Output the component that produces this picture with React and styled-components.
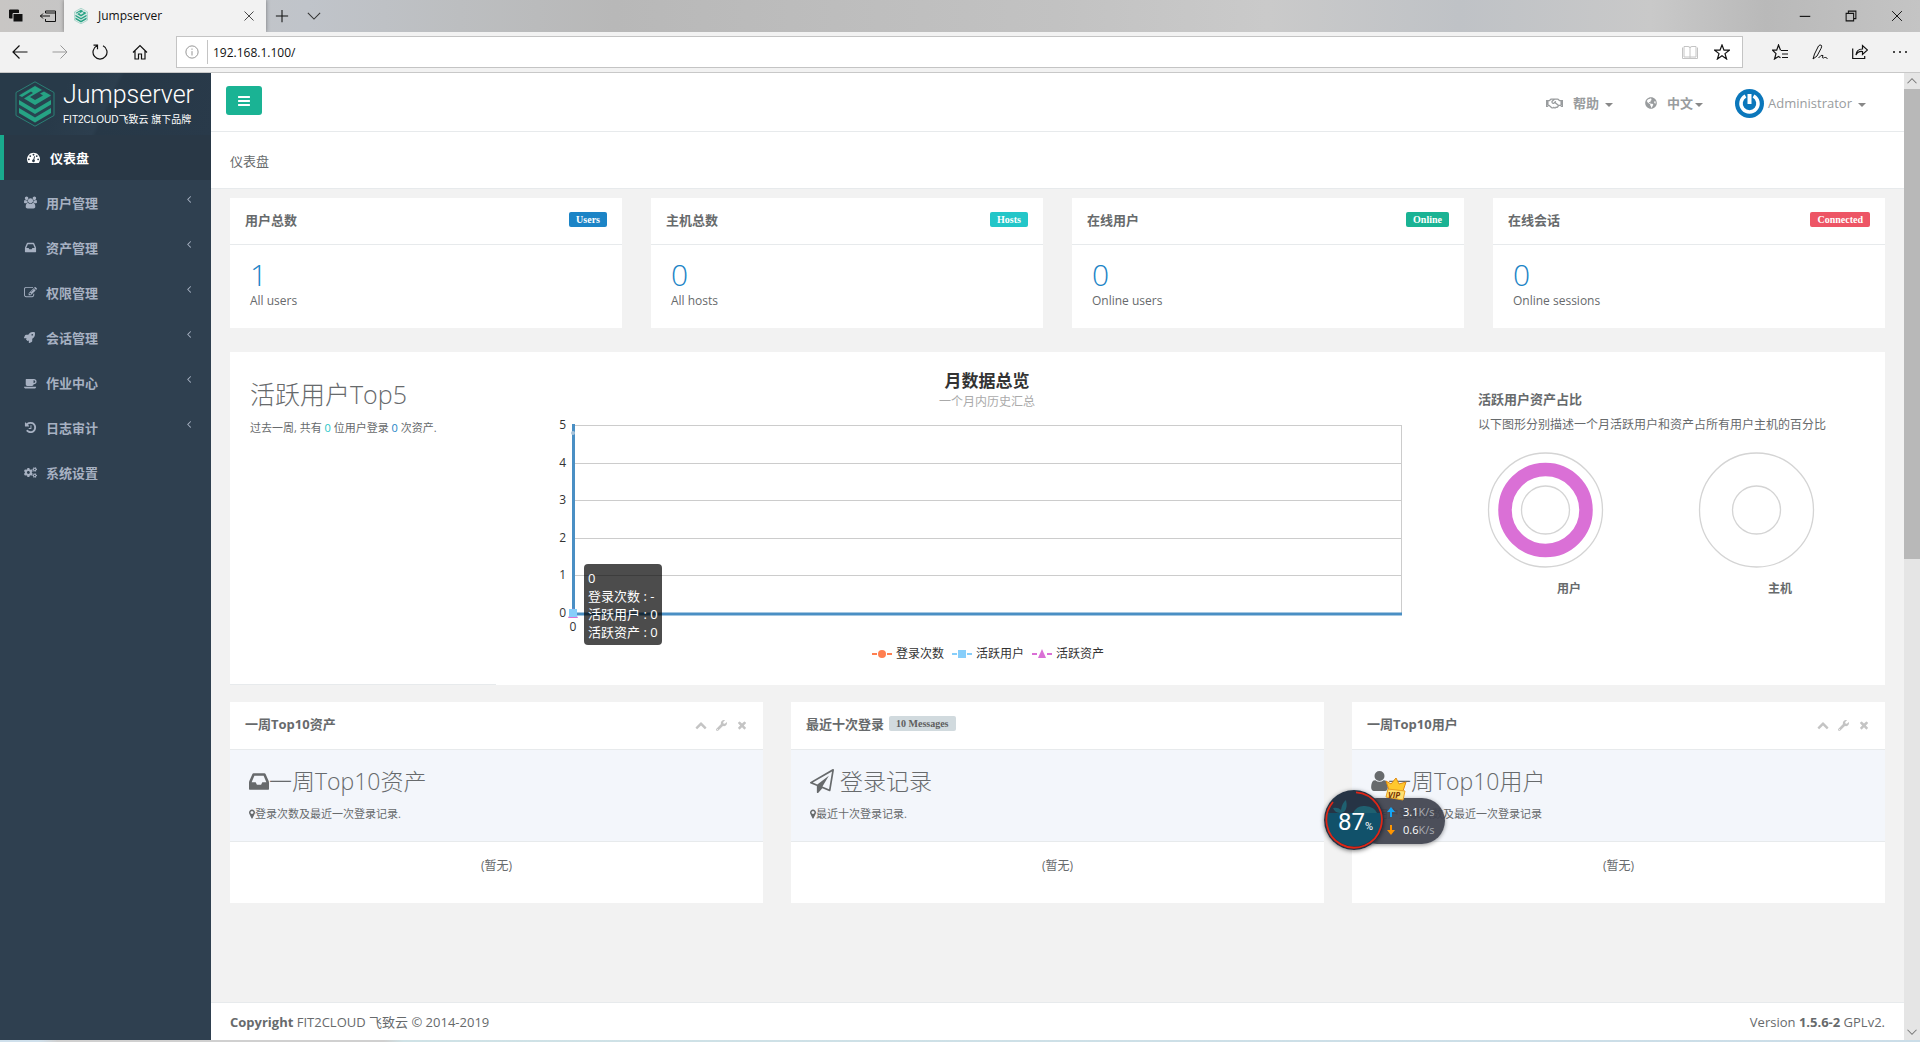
import { useState } from 'react';
import styled, { createGlobalStyle } from 'styled-components';
import { FaRocket, FaCogs, FaWrench, FaGlobeAmericas, FaRegHandshake } from 'react-icons/fa';

const paths = {
  bars: 'M1664 1344v128q0 26-19 45t-45 19h-1408q-26 0-45-19t-19-45v-128q0-26 19-45t45-19h1408q26 0 45 19t19 45zm0-512v128q0 26-19 45t-45 19h-1408q-26 0-45-19t-19-45v-128q0-26 19-45t45-19h1408q26 0 45 19t19 45zm0-512v128q0 26-19 45t-45 19h-1408q-26 0-45-19t-19-45v-128q0-26 19-45t45-19h1408q26 0 45 19t19 45z',
  users:
    'M593 896q-162 5-265 128h-134q-82 0-138-40.5t-56-118.5q0-353 124-353 6 0 43.5 21t97.5 42.5 119 21.5q67 0 133-23-5 37-5 66 0 139 81 256zm1071 637q0 120-73 189.5t-194 69.5h-874q-121 0-194-69.5t-73-189.5q0-53 3.5-103.5t14-109 26.5-108.5 43-97.5 62-81 85.5-53.5 111.5-20q10 0 43 21.5t73 48 107 48 135 21.5 135-21.5 107-48 73-48 43-21.5q61 0 111.5 20t85.5 53.5 62 81 43 97.5 26.5 108.5 14 109 3.5 103.5zm-1024-1277q0 106-75 181t-181 75-181-75-75-181 75-181 181-75 181 75 75 181zm704 384q0 159-112.5 271.5t-271.5 112.5-271.5-112.5-112.5-271.5 112.5-271.5 271.5-112.5 271.5 112.5 112.5 271.5zm576 225q0 78-56 118.5t-138 40.5h-134q-103-123-265-128 81-117 81-256 0-29-5-66 66 23 133 23 59 0 119-21.5t97.5-42.5 43.5-21q124 0 124 353zm-128-609q0 106-75 181t-181 75-181-75-75-181 75-181 181-75 181 75 75 181z',
  inbox:
    'M1151 960h316q-1-3-2.5-8t-2.5-8l-212-496h-708l-212 496q-1 2-2.5 8t-2.5 8h316l95 192h320zm513 30v482q0 26-19 45t-45 19h-1408q-26 0-45-19t-19-45v-482q0-62 25-123l238-552q10-25 36.5-42t52.5-17h832q26 0 52.5 17t36.5 42l238 552q25 61 25 123z',
  up: 'M1683 1331l-166 165q-19 19-45 19t-45-19l-531-531-531 531q-19 19-45 19t-45-19l-166-165q-19-19-19-45.5t19-45.5l742-741q19-19 45-19t45 19l742 741q19 19 19 45.5t-19 45.5z',
  times:
    'M1490 1322q0 40-28 68l-136 136q-28 28-68 28t-68-28l-294-294-294 294q-28 28-68 28t-68-28l-136-136q-28-28-28-68t28-68l294-294-294-294q-28-28-28-68t28-68l136-136q28-28 68-28t68 28l294 294 294-294q28-28 68-28t68 28l136 136q28 28 28 68t-28 68l-294 294 294 294q28 28 28 68z',
  user: 'M1536 1399q0 109-62.5 187t-150.5 78h-854q-88 0-150.5-78t-62.5-187q0-85 8.5-160.5t31.5-152 58.5-131 94-89 134.5-34.5q131 128 313 128t313-128q76 0 134.5 34.5t94 89 58.5 131 31.5 152 8.5 160.5zm-256-887q0 159-112.5 271.5t-271.5 112.5-271.5-112.5-112.5-271.5 112.5-271.5 271.5-112.5 271.5 112.5 112.5 271.5z',
  marker:
    'M1152 640q0-106-75-181t-181-75-181 75-75 181 75 181 181 75 181-75 75-181zm256 0q0 109-33 179l-364 774q-16 33-47.5 52t-67.5 19-67.5-19-46.5-52l-365-774q-33-70-33-179 0-212 150-362t362-150 362 150 150 362z',
  coffee:
    'M1664 768q0-80-56-136t-136-56h-64v384h64q80 0 136-56t56-136zm-1664 768h1792q0 106-75 181t-181 75h-1280q-106 0-181-75t-75-181zm1856-768q0 159-112.5 271.5t-271.5 112.5h-64v32q0 92-66 158t-158 66h-704q-92 0-158-66t-66-158v-736q0-26 19-45t45-19h1152q159 0 271.5 112.5t112.5 271.5z',
  dashboard:
    'M384 1152q0-53-37.5-90.5t-90.5-37.5-90.5 37.5-37.5 90.5 37.5 90.5 90.5 37.5 90.5-37.5 37.5-90.5zm192-448q0-53-37.5-90.5t-90.5-37.5-90.5 37.5-37.5 90.5 37.5 90.5 90.5 37.5 90.5-37.5 37.5-90.5zm428 481l101-382q6-26-7.5-48.5t-38.5-29.5-48 6.5-30 39.5l-101 382q-60 5-107 43.5t-63 98.5q-20 77 20 146t117 89 146-20 89-117q16-60-6-117t-72-91zm660-33q0-53-37.5-90.5t-90.5-37.5-90.5 37.5-37.5 90.5 37.5 90.5 90.5 37.5 90.5-37.5 37.5-90.5zm-640-640q0-53-37.5-90.5t-90.5-37.5-90.5 37.5-37.5 90.5 37.5 90.5 90.5 37.5 90.5-37.5 37.5-90.5zm448 192q0-53-37.5-90.5t-90.5-37.5-90.5 37.5-37.5 90.5 37.5 90.5 90.5 37.5 90.5-37.5 37.5-90.5zm320 448q0 261-141 483-19 29-54 29h-1402q-35 0-54-29-141-221-141-483 0-182 71-348t191-286 286-191 348-71 348 71 286 191 191 286 71 348z',
  history:
    'M1664 896q0 156-61 298t-164 245-245 164-298 61q-172 0-327-72.5t-264-204.5q-7-10-6.5-22.5t8.5-20.5l137-138q10-9 25-9 16 2 23 12 73 95 179 147t225 52q104 0 198.5-40.5t163.5-109.5 109.5-163.5 40.5-198.5-40.5-198.5-109.5-163.5-163.5-109.5-198.5-40.5q-98 0-188 35.5t-160 101.5l137 138q31 30 14 69-17 40-59 40h-448q-26 0-45-19t-19-45v-448q0-42 40-59 39-17 69 14l130 129q107-101 244.5-156.5t284.5-55.5q156 0 298 61t245 164 164 245 61 298zm-640-288v448q0 14-9 23t-23 9h-320q-14 0-23-9t-9-23v-64q0-14 9-23t23-9h224v-352q0-14 9-23t23-9h64q14 0 23 9t9 23z',
  edit: 'M888 1184l116-116-152-152-116 116v56h96v96h56zm440-720q-16-16-33 1l-350 350q-17 17-1 33t33-1l350-350q17-17 1-33zm80 594v190q0 119-84.5 203.5t-203.5 84.5h-832q-119 0-203.5-84.5t-84.5-203.5v-832q0-119 84.5-203.5t203.5-84.5h832q63 0 117 25 15 7 18 23 3 17-9 29l-49 49q-14 14-32 8-23-6-45-6h-832q-66 0-113 47t-47 113v832q0 66 47 113t113 47h832q66 0 113-47t47-113v-126q0-13 9-22l64-64q15-15 35-7t20 29zm-96-738l288 288-672 672h-288v-288zm444 132l-92 92-288-288 92-92q28-28 68-28t68 28l152 152q28 28 28 68t-28 68z',
  plane:
    'M1764 11q33 24 27 64l-256 1536q-5 29-32 45-14 8-31 8-11 0-24-5l-527-215-298 327q-18 21-47 21-14 0-23-4-19-7-30-23.5t-11-36.5v-452l-472-193q-37-14-40-55-3-39 32-59l1664-960q35-21 68 2zm-342 1499l221-1323-1434 827 336 137 863-639-478 797z',
  left: 'M1203 544q0 13-10 23l-393 393 393 393q10 10 10 23t-10 23l-50 50q-10 10-23 10t-23-10l-466-466q-10-10-10-23t10-23l466-466q10-10 23-10t23 10l50 50q10 10 10 23z',
};

function Icon({ name, size = 13, width = size, box = '0 0 1792 1792' }) {
  return (
    <svg width={width} height={size} viewBox={box} fill="currentColor" aria-hidden="true">
      <path d={paths[name]} />
    </svg>
  );
}

// 浏览器工具栏图标
function Line({ size = 16, color = '#111', children }) {
  return (
    <svg width={size} height={size} viewBox="0 0 16 16" fill="none" stroke={color} aria-hidden="true">
      {children}
    </svg>
  );
}

function LogoMark({ size, ring }) {
  return (
    <svg width={size} height={(size * 46) / 40} viewBox="0 0 40 46" aria-hidden="true">
      <path d="M20 .8 39 11.5v23L20 45.2 1 34.5v-23z" fill="none" stroke={ring} strokeWidth="1" />
      <path d="M20 4 36 13v19.5L20 42 4 32.5V13z" fill={ring} opacity=".15" />
      <path d="M4 14.5 20 5l7 4-12 7 5 3 8-4.500-3-2 4-2 7 4L20 24 9 17.500l9-5.500-2-1.500-9 5.500z" fill="#26a384" />
      <path d="M4 19l16 9.5L36 19v4.5L20 33 4 23.5z" fill="#26a384" />
      <path d="M4 27l16 9.5L36 27v5L20 41.5 4 32z" fill="#26a384" />
    </svg>
  );
}

const menus = [
  { label: '用户管理', icon: <Icon name="users" box="0 0 1920 1792" /> },
  { label: '资产管理', icon: <Icon name="inbox" /> },
  { label: '权限管理', icon: <Icon name="edit" /> },
  { label: '会话管理', icon: <FaRocket size={11} /> },
  { label: '作业中心', icon: <Icon name="coffee" box="0 0 1920 1792" /> },
  { label: '日志审计', icon: <Icon name="history" /> },
  { label: '系统设置', icon: <FaCogs size={13} />, leaf: true },
];

const stats = [
  { title: '用户总数', tag: 'Users', color: '#1c84c6', value: 1, desc: 'All users' },
  { title: '主机总数', tag: 'Hosts', color: '#23c6c8', value: 0, desc: 'All hosts' },
  { title: '在线用户', tag: 'Online', color: '#1ab394', value: 0, desc: 'Online users' },
  { title: '在线会话', tag: 'Connected', color: '#ed5565', value: 0, desc: 'Online sessions' },
];

const boxes = [
  {
    title: '一周Top10资产',
    head: '一周Top10资产',
    icon: <Icon name="inbox" size={17} width={20} box="128 256 1536 1280" />,
    note: '登录次数及最近一次登录记录.',
    tools: true,
  },
  {
    title: '最近十次登录',
    head: '登录记录',
    icon: <Icon name="plane" size={24} />,
    spaced: true,
    note: '最近十次登录记录.',
    messages: '10 Messages',
  },
  {
    title: '一周Top10用户',
    head: '一周Top10用户',
    icon: <Icon name="user" size={20} width={17} box="256 128 1280 1536" />,
    note: '用户登录次数及最近一次登录记录',
    tools: true,
  },
];

function Browser() {
  const [url, setUrl] = useState('192.168.1.100/');

  return (
    <>
      <TabBar>
        <TabTools>
          <TabButton aria-label="Tabs set aside">
            <Line>
              <path d="M1.5 2h9v8h-9z" fill="#111" />
              <path d="M5 5.5h10V14H5z" fill="#111" stroke="#c8c8c8" />
            </Line>
          </TabButton>
          <TabButton aria-label="Set tabs aside">
            <Line>
              <path d="M5.5 5V3h10v10.5h-10V11M5.5 5h10M0 8h10M3 5.5.5 8 3 10.5" />
            </Line>
          </TabButton>
        </TabTools>
        <Tab>
          <LogoMark size={14} ring="#26a384" />
          <span>Jumpserver</span>
          <TabButton aria-label="Close tab">
            <Line size={12}>
              <path d="M2 2l12 12M14 2 2 14" />
            </Line>
          </TabButton>
        </Tab>
        <NewTabs>
          <TabButton aria-label="New tab">
            <Line size={14}>
              <path d="M8 1v14M1 8h14" strokeWidth="1.2" />
            </Line>
          </TabButton>
          <TabButton aria-label="Tab previews">
            <Line size={14} color="#333">
              <path d="M1 4.5l7 7 7-7" strokeWidth="1.2" />
            </Line>
          </TabButton>
        </NewTabs>
        <WindowTools>
          <TabButton aria-label="Minimize">
            <Line size={12}>
              <path d="M1 8.500h14" strokeWidth="1.5" />
            </Line>
          </TabButton>
          <TabButton aria-label="Restore">
            <Line size={12}>
              <path d="M1.5 4.5h10v10h-10zM4.5 4.5v-3h10v10h-3" strokeWidth="1.4" />
            </Line>
          </TabButton>
          <TabButton aria-label="Close">
            <Line size={12}>
              <path d="M1.5 1.5l13 13M14.5 1.5l-13 13" strokeWidth="1.3" />
            </Line>
          </TabButton>
        </WindowTools>
      </TabBar>
      <AddressBar>
        <NavButtons>
          <TabButton aria-label="Back">
            <Line>
              <path d="M15.5 8H1M7.5 1.5 1 8l6.5 6.5" strokeWidth="1.2" />
            </Line>
          </TabButton>
          <TabButton aria-label="Forward">
            <Line color="#999">
              <path d="M.5 8H15M8.5 1.5 15 8l-6.5 6.5" />
            </Line>
          </TabButton>
          <TabButton aria-label="Refresh">
            <Line>
              <path d="M11 1.8A7 7 0 1 1 5 1.8M1.5 1.2h4v4" strokeWidth="1.2" />
            </Line>
          </TabButton>
          <TabButton aria-label="Home">
            <Line>
              <path d="M1 8.5 8 1.5l7 7M3 7v8h3.5v-5h3v5H13V7" strokeWidth="1.2" />
            </Line>
          </TabButton>
        </NavButtons>
        <UrlBox>
          <Line size={14} color="#888">
            <circle cx="8" cy="8" r="7" />
            <path d="M8 7v5M8 4v1.5" />
          </Line>
          <UrlInput aria-label="URL" value={url} onChange={(e) => setUrl(e.target.value)} />
          <Line color="#c4c4c4">
            <path d="M8 3v11M2 2.5h4q2 0 2 1.5 0-1.5 2-1.5h4V13H2zM.5 3.5v11h15v-11" />
          </Line>
          <Line>
            <path d="M8 1l2 5.200h5.300l-4.300 3.400 1.600 5.400L8 11.800 3.400 15 5 9.600.700 6.200H6z" strokeWidth="1.2" />
          </Line>
        </UrlBox>
        <HubButtons>
          <TabButton aria-label="Favorites">
            <Line>
              <path d="M9 6.5h7M10 10h6M10 13.5h6M8.500 6.200 6.500 1 4.700 6.200H.500L4 9.600 2.500 15l4-2.500 2 1.200" strokeWidth="1.2" />
            </Line>
          </TabButton>
          <TabButton aria-label="Add notes">
            <Line>
              <path d="M1 15 2.5 10 6.500 2q1.500-2 3-.500.500 1-.500 3L5 12zM6.500 14q3-4 4.500-2.500-1.500 3 .500 2.500l1-.500q1-.500 3 1" />
            </Line>
          </TabButton>
          <TabButton aria-label="Share">
            <Line>
              <path d="M.7 4.5v10h12V12M4 11q.5-6 6.5-6V1.5L15.5 6l-5 4.500V7.500Q6 7 4 11z" strokeWidth="1.2" />
            </Line>
          </TabButton>
          <TabButton aria-label="More">
            <Line>
              <path d="M1 8h2M7 8h2M13 8h2" strokeWidth="1.5" />
            </Line>
          </TabButton>
        </HubButtons>
      </AddressBar>
    </>
  );
}

function Sidebar() {
  return (
    <Side>
      <Logo>
        <LogoMark size={40} ring="#2b8176" />
        <LogoText>
          <LogoName>Jumpserver</LogoName>
          <LogoSub>FIT2CLOUD飞致云 旗下品牌</LogoSub>
        </LogoText>
      </Logo>
      <nav>
        <MenuLink href="#" $active>
          <Icon name="dashboard" />
          <span>仪表盘</span>
        </MenuLink>
        {menus.map(({ label, icon, leaf }) => (
          <MenuLink href="#" key={label}>
            <MenuIcon>{icon}</MenuIcon>
            <span>{label}</span>
            {!leaf && (
              <Arrow>
                <Icon name="left" size={12} />
              </Arrow>
            )}
          </MenuLink>
        ))}
      </nav>
    </Side>
  );
}

function MonthChart() {
  const series = [
    { name: '登录次数', color: '#ff7f50', mark: <circle cx="10" cy="0" r="4" /> },
    { name: '活跃用户', color: '#87cefa', mark: <path d="M6-4h8v8H6z" /> },
    { name: '活跃资产', color: '#da70d6', mark: <path d="M10-5l4 9H6z" /> },
  ];

  return (
    <ChartArea>
      <ChartSvg viewBox="0 0 982 333">
        <text x="491" y="35" textAnchor="middle" fontSize="17" fontWeight="700" fill="#333">
          月数据总览
        </text>
        <text x="491" y="54" textAnchor="middle" fontSize="12" fill="#aaa">
          一个月内历史汇总
        </text>
        {[5, 4, 3, 2, 1, 0].map((n, i) => (
          <g key={n}>
            <path d={`M77 ${Math.round(73 + i * 37.6) + 0.5}H906`} stroke="#ccc" />
            <text x="70" y={Math.round(77 + i * 37.6)} textAnchor="end" fontSize="12" fill="#333">
              {n}
            </text>
          </g>
        ))}
        <path d="M905.5 73v188" stroke="#ccc" />
        <path d="M77.5 72v190H906" fill="none" stroke="#4a8fc4" strokeWidth="3" />
        <circle cx="77" cy="81" r="2" fill="#aac4da" />
        <path d="M77 256l5 10H72z" fill="#da70d6" />
        <path d="M73 257h8v8h-8z" fill="#87cefa" />
        <text x="77" y="279" textAnchor="middle" fontSize="12" fill="#333">
          0
        </text>
        {series.map(({ name, color, mark }, i) => (
          <g key={name} transform={`translate(${376 + i * 80} 302)`} fill={color}>
            <path d="M0 0h5M15 0h5" stroke={color} strokeWidth="2" />
            {mark}
            <text x="24" y="4" fontSize="12" fill="#333">
              {name}
            </text>
          </g>
        ))}
      </ChartSvg>
      <Tooltip>
        0<br />
        登录次数 : -<br />
        活跃用户 : 0<br />
        活跃资产 : 0
      </Tooltip>
    </ChartArea>
  );
}

function Donut({ label, filled }) {
  return (
    <DonutBox>
      <svg width="135" height="120" viewBox="0 0 135 120" fill="none" stroke="#d4d4d4" strokeWidth="1.3" aria-hidden="true">
        <circle cx="67.5" cy="60" r="57" />
        <circle cx="67.5" cy="60" r="24" />
        {filled && <circle cx="67.5" cy="60" r="40.5" stroke="#da70d6" strokeWidth="13.5" />}
      </svg>
      <figcaption>{label}</figcaption>
    </DonutBox>
  );
}

function SpeedWidget() {
  return (
    <Widget>
      <Speeds>
        <div>
          <svg width="8" height="10" viewBox="0 0 8 10" aria-hidden="true">
            <path d="M4 0l4 5H5v5H3V5H0z" fill="#14a5f5" />
          </svg>
          3.1<i>K/s</i>
        </div>
        <div>
          <svg width="8" height="10" viewBox="0 0 8 10" aria-hidden="true">
            <path d="M4 10L0 5h3V0h2v5h3z" fill="#ff9500" />
          </svg>
          0.6<i>K/s</i>
        </div>
      </Speeds>
      <Ball>
        <svg width="60" height="60" viewBox="0 0 60 60" aria-hidden="true">
          <circle cx="30" cy="30" r="30" fill="#263445" />
          <path d="M2.5 23h55a28 28 0 1 1-55 0z" fill="#11516a" />
          <path d="M9 18q5-1 8 2 1-7 5-10 2 8-2 12-8 3-11-4zM29 23q4-8 12-7 10 1 12 7z" fill="#1f6070" />
          <path d="M32 2.3A27.7 27.7 0 1 1 9 12" fill="none" stroke="#e02616" strokeWidth="1.8" />
        </svg>
        <Percent>
          87<small>%</small>
        </Percent>
      </Ball>
      <Crown width="24" height="24" viewBox="0 0 24 24" aria-hidden="true">
        <path d="M2 4l5 3 5-6 3 6 7-2-3 9-14-1z" fill="#ffc82e" stroke="#e08a12" />
        <path d="M4 12l17 2-2 9-17-3z" fill="#ffdf70" stroke="#e9a020" />
        <text x="4" y="21" fontSize="8" fontWeight="700" fontStyle="italic" fill="#7a3500">
          VIP
        </text>
      </Crown>
    </Widget>
  );
}

export default function App() {
  const [sideOpen, setSideOpen] = useState(true);

  return (
    <Page>
      <GlobalStyle />
      <Browser />
      <Viewport>
        {sideOpen && <Sidebar />}
        <Main>
          <TopNav>
            <ToggleButton aria-label="Toggle menu" onClick={() => setSideOpen(!sideOpen)}>
              <Icon name="bars" size={14} />
            </ToggleButton>
            <NavLinks>
              <NavLink href="#">
                <FaRegHandshake size={17} />
                <span>
                  <b>帮助</b>
                  <Caret $wide />
                </span>
              </NavLink>
              <NavLink href="#">
                <FaGlobeAmericas size={12} />
                <span>
                  <b>中文</b>
                  <Caret />
                </span>
              </NavLink>
              <UserLink href="#">
                <svg width="29" height="29" viewBox="0 0 29 29" aria-hidden="true">
                  <circle cx="14.5" cy="14.5" r="14.5" fill="#0b77bb" />
                  <path d="M10.5 7A8.5 8.5 0 1 0 18.5 7" fill="none" stroke="#fff" strokeWidth="3.5" />
                  <path d="M14.5 5v10" stroke="#fff" strokeWidth="4" />
                </svg>
                <span>
                  Administrator
                  <Caret $wide />
                </span>
              </UserLink>
            </NavLinks>
          </TopNav>
          <PageHeading>仪表盘</PageHeading>
          <Content>
            <StatRow>
              {stats.map(({ title, tag, color, value, desc }) => (
                <Card key={title}>
                  <CardTitle>
                    <h5>{title}</h5>
                    <Label $color={color}>{tag}</Label>
                  </CardTitle>
                  <StatBody>
                    <StatLink href="#">{value}</StatLink>
                    <p>{desc}</p>
                  </StatBody>
                </Card>
              ))}
            </StatRow>
            <Overview>
              <TopUsers>
                <h2>活跃用户Top5</h2>
                <Small>
                  过去一周, 共有 <Num $color="#23c6c8">0</Num> 位用户登录 <Num $color="#1c84c6">0</Num> 次资产.
                </Small>
              </TopUsers>
              <MonthChart />
              <Ratio>
                <h5>活跃用户资产占比</h5>
                <p>以下图形分别描述一个月活跃用户和资产占所有用户主机的百分比</p>
                <Donuts>
                  <Donut label="用户" filled />
                  <Donut label="主机" />
                </Donuts>
              </Ratio>
            </Overview>
            <BoxRow>
              {boxes.map(({ title, head, icon, spaced, note, tools, messages }) => (
                <Card key={title}>
                  <CardTitle $tall>
                    <h5>{title}</h5>
                    {messages && <Label>{messages}</Label>}
                    {tools && (
                      <Tools>
                        <button aria-label="Collapse">
                          <Icon name="up" size={12} />
                        </button>
                        <button aria-label="Settings">
                          <FaWrench size={11} />
                        </button>
                        <button aria-label="Close">
                          <Icon name="times" size={12} />
                        </button>
                      </Tools>
                    )}
                  </CardTitle>
                  <BoxHeading>
                    <BoxName $spaced={spaced}>
                      {icon}
                      {head}
                    </BoxName>
                    <Small>
                      <Icon name="marker" size={10} width={6} box="384 128 1024 1536" />
                      {note}
                    </Small>
                  </BoxHeading>
                  <BoxBody>(暂无)</BoxBody>
                </Card>
              ))}
            </BoxRow>
          </Content>
          <Footer>
            <span>
              <b>Copyright</b> FIT2CLOUD 飞致云 © 2014-2019
            </span>
            <span>
              Version <b>1.5.6-2</b> GPLv2.
            </span>
          </Footer>
        </Main>
        <ScrollBar>
          <Line size={12} color="#777">
            <path d="M2 11l6-6 6 6" strokeWidth="1.4" />
          </Line>
          <Thumb />
          <Line size={12} color="#777">
            <path d="M2 5l6 6 6-6" strokeWidth="1.4" />
          </Line>
        </ScrollBar>
      </Viewport>
      <TaskEdge />
      <SpeedWidget />
    </Page>
  );
}

const GlobalStyle = createGlobalStyle`
  * {
    box-sizing: border-box;
  }

  body {
    margin: 0;
    font-family: 'Open Sans', 'Noto Sans CJK SC', sans-serif;
    font-size: 12px;
    line-height: 18px;
    color: #676a6c;
    background-color: #f2f2f2;
  }

  h2, h3, h5, p, figure {
    margin: 0;
  }

  a {
    text-decoration: none;
  }

  button {
    padding: 0;
    border: none;
    background: none;
    font: inherit;
    color: inherit;
    cursor: pointer;
  }

  svg {
    flex: none;
  }
`;

const Page = styled.div`
  min-height: 100vh;
  display: flex;
  flex-direction: column;
  position: relative;
`;

const TabBar = styled.div`
  height: 32px;
  display: flex;
  background: linear-gradient(90deg, #c8c6c4 0%, #c0c4ca 16%, #bcbec0 24%, #b8b8b8 32%, #c2c2c2 55%, #cacaca 66%, #bfc2c6 76%, #c9c9c9 86%, #b9b9b9 92%, #c4c4c4 100%);
`;

const TabTools = styled.div`
  width: 64px;
  padding: 0 8px;
  display: flex;
  justify-content: space-between;
`;

const TabButton = styled.button`
  display: flex;
  align-items: center;
  justify-content: center;
`;

const Tab = styled.div`
  width: 202px;
  padding: 0 11px 0 10px;
  display: flex;
  align-items: center;
  gap: 10px;
  background-color: #f2f2f2;
  box-shadow: 0 0 4px rgba(0, 0, 0, 0.4);
  color: #111;

  & span {
    flex: 1;
  }
`;

const NewTabs = styled.div`
  padding: 0 9px;
  display: flex;
  gap: 18px;
`;

const WindowTools = styled.div`
  margin-left: auto;
  padding-right: 17px;
  display: flex;
  gap: 34px;
`;

const AddressBar = styled.div`
  height: 41px;
  padding: 4px 12px;
  display: flex;
  background-color: #f2f2f2;
  border-bottom: 1px solid #c8c8c8;
`;

const NavButtons = styled.div`
  width: 164px;
  display: flex;
  gap: 24px;
`;

const UrlBox = styled.div`
  flex: 1;
  height: 32px;
  padding: 0 12px 0 8px;
  display: flex;
  align-items: center;
  gap: 16px;
  background-color: white;
  border: 1px solid #c4c4c4;
`;

const UrlInput = styled.input`
  flex: 1;
  height: 24px;
  padding: 0 0 0 5px;
  margin-left: -8px;
  border: none;
  border-left: 1px solid #c4c4c4;
  outline: none;
  font: inherit;
  color: #111;
`;

const HubButtons = styled.div`
  width: 165px;
  display: flex;
  justify-content: flex-end;
  gap: 24px;
`;

const Viewport = styled.div`
  flex: 1;
  display: flex;
`;

const Side = styled.aside`
  width: 211px;
  flex: none;
  background-color: #2f4050;
`;

const Logo = styled.div`
  height: 62px;
  padding-left: 15px;
  display: flex;
  align-items: center;
  gap: 8px;
  color: white;
  background: linear-gradient(115deg, #283a49 0%, #283a49 30%, #2c3e4e 50%, #273847 52%, #293a4a 100%);
`;

const LogoText = styled.div`
  padding-top: 3px;
`;

const LogoName = styled.div`
  font-family: Roboto, sans-serif;
  font-size: 25px;
  font-weight: 300;
  line-height: 26px;
`;

const LogoSub = styled.div`
  margin-top: 3px;
  font-family: 'Liberation Sans', 'Noto Sans CJK SC', sans-serif;
  font-size: 10px;
  line-height: 18px;
`;

const MenuLink = styled.a`
  height: 45px;
  padding-left: ${({ $active }) => ($active ? '23px' : '24px')};
  padding-right: 16px;
  display: flex;
  align-items: center;
  gap: ${({ $active }) => ($active ? '10px' : '6px')};
  font-size: 13px;
  font-weight: 600;
  color: ${({ $active }) => ($active ? 'white' : '#a7b1c2')};
  background-color: ${({ $active }) => ($active ? '#293846' : 'transparent')};
  border-left: ${({ $active }) => ($active ? '4px solid #19aa8d' : 'none')};
`;

const MenuIcon = styled.span`
  width: 16px;
  display: flex;
`;

const Arrow = styled.span`
  margin-left: auto;
  padding-bottom: 6px;
  line-height: 12px;
`;

const Main = styled.main`
  flex: 1;
  min-width: 0;
  display: flex;
  flex-direction: column;
`;

const TopNav = styled.header`
  height: 59px;
  padding: 13px 38px 0 15px;
  display: flex;
  justify-content: space-between;
  background-color: white;
  border-bottom: 1px solid #e7eaec;
`;

const ToggleButton = styled.button`
  width: 36px;
  height: 29px;
  display: flex;
  align-items: center;
  justify-content: center;
  border-radius: 3px;
  background-color: #1ab394;
  color: white;
`;

const NavLinks = styled.div`
  height: 34px;
  display: flex;
  align-items: center;
  gap: 32px;
`;

const NavLink = styled.a`
  display: flex;
  align-items: center;
  gap: 10px;
  font-size: 13px;
  color: #999c9e;
`;

const UserLink = styled(NavLink)`
  gap: 4px;
`;

const Caret = styled.span`
  display: inline-block;
  margin-left: ${({ $wide }) => ($wide ? '6px' : '2px')};
  border: 4px solid transparent;
  border-top-color: #888;
  border-bottom: none;
  vertical-align: middle;
`;

const PageHeading = styled.div`
  height: 57px;
  padding: 20px 19px;
  background-color: white;
  border-bottom: 1px solid #e7eaec;
  font-size: 13px;
`;

const Content = styled.div`
  flex: 1;
  padding: 9px 19px 20px;
`;

const StatRow = styled.div`
  display: grid;
  grid-template-columns: repeat(4, 1fr);
  gap: 29px;
`;

const Card = styled.section`
  background-color: white;
`;

const CardTitle = styled.div`
  min-height: ${({ $tall }) => ($tall ? '48px' : '47px')};
  padding: 12px 15px 13px;
  display: flex;
  align-items: flex-start;
  justify-content: ${({ $tall }) => ($tall ? 'flex-start' : 'space-between')};
  gap: 5px;
  border-bottom: 1px solid #e7eaec;

  & h5 {
    font-size: 13px;
    line-height: 20px;
    font-weight: 700;
  }
`;

const Label = styled.span`
  margin-top: 2px;
  padding: 0 7px;
  border-radius: 2px;
  background-color: ${({ $color }) => $color || '#d1dade'};
  color: ${({ $color }) => ($color ? 'white' : '#5e5e5e')};
  font-family: 'Liberation Serif', serif;
  font-size: 10px;
  line-height: 15px;
  font-weight: 700;
`;

const Tools = styled.div`
  margin-left: auto;
  height: 22px;
  display: flex;
  align-items: center;
  gap: 9px;
  color: #c4c4c4;

  & button {
    display: flex;
  }
`;

const StatBody = styled.div`
  padding: 13px 20px 18px;
`;

const StatLink = styled.a`
  display: block;
  font-size: 30px;
  line-height: 34px;
  font-weight: 300;
  color: #1c84c6;
`;

const Overview = styled.section`
  margin: 24px 0 17px;
  display: grid;
  grid-template-columns: 266px minmax(0, 1fr) 407px;
  background-color: white;
`;

const TopUsers = styled.div`
  padding: 25px 20px;
  border-bottom: 1px solid #e7eaec;

  & h2 {
    margin-bottom: 8px;
    font-size: 25px;
    line-height: 34px;
    font-weight: 300;
  }
`;

const Small = styled.p`
  display: flex;
  align-items: center;
  white-space: pre;
  font-size: 11px;
`;

const Num = styled.span`
  color: ${({ $color }) => $color};
`;

const ChartArea = styled.div`
  position: relative;
`;

const ChartSvg = styled.svg`
  display: block;
  width: 100%;
`;

const Tooltip = styled.div`
  position: absolute;
  left: 88px;
  top: 212px;
  padding: 5px 4px 4px;
  border-radius: 4px;
  background-color: rgba(0, 0, 0, 0.7);
  color: white;
  font-size: 13px;
  white-space: nowrap;
`;

const Ratio = styled.div`
  padding-top: 37px;

  & h5 {
    margin-bottom: 7px;
    font-size: 13px;
    line-height: 20px;
    font-weight: 700;
  }
`;

const Donuts = styled.div`
  margin-top: 16px;
  display: flex;
  gap: 29px;
`;

const DonutBox = styled.figure`
  width: 182px;

  & svg {
    display: block;
  }

  & figcaption {
    margin-top: 10px;
    text-align: center;
    font-weight: 600;
  }
`;

const BoxRow = styled.div`
  display: grid;
  grid-template-columns: repeat(3, 1fr);
  gap: 28px;
`;

const BoxHeading = styled.div`
  padding: 14px 19px 18px;
  background-color: #f3f6fb;
  border-bottom: 1px solid #e7eaec;
`;

const BoxName = styled.h3`
  margin-bottom: 7px;
  display: flex;
  align-items: center;
  gap: ${({ $spaced }) => ($spaced ? '6px' : '0')};
  font-size: 23px;
  line-height: 34px;
  font-weight: 300;
`;

const BoxBody = styled.div`
  padding: 15px 20px 28px;
  text-align: center;
`;

const Footer = styled.footer`
  height: 38px;
  padding: 10px 19px 0;
  display: flex;
  justify-content: space-between;
  background-color: white;
  border-top: 1px solid #e7eaec;
  font-size: 13px;
`;

const ScrollBar = styled.div`
  width: 16px;
  padding: 2px 0;
  display: flex;
  flex-direction: column;
  align-items: center;
  justify-content: space-between;
  background-color: #e5e5e5;
`;

const Thumb = styled.div`
  width: 16px;
  height: 470px;
  margin: 2px 0 auto;
  background-color: #b8b8b8;
`;

const TaskEdge = styled.div`
  height: 2px;
  background: linear-gradient(90deg, #cfe0ec 0%, #cfe0ec 2%, #d0d0d0 3%, #d0d0d0 20%, #cfe2e6 21%, #cbdde8 100%);
`;

const Widget = styled.div`
  position: absolute;
  left: 1324px;
  top: 790px;
  width: 121px;
  height: 60px;
`;

const Speeds = styled.div`
  position: absolute;
  left: 30px;
  right: 0;
  top: 8px;
  padding: 5px 0 5px 33px;
  border-radius: 23px;
  background-color: rgba(62, 66, 78, 0.93);
  box-shadow: 0 1px 4px rgba(0, 0, 0, 0.4);
  color: white;
  font-size: 11px;

  & div {
    display: flex;
    align-items: center;
  }

  & svg {
    margin-right: 8px;
  }

  & i {
    font-style: normal;
    color: #a8abb2;
  }
`;

const Ball = styled.div`
  position: absolute;
  left: 0;
  top: 0;
  width: 60px;
  height: 60px;
  border-radius: 50%;
  box-shadow: 0 1px 4px rgba(0, 0, 0, 0.5);
`;

const Percent = styled.span`
  position: absolute;
  left: 14px;
  top: 16px;
  font-family: Roboto, sans-serif;
  font-size: 24px;
  line-height: 32px;
  font-weight: 400;
  color: white;

  & small {
    font-size: 11px;
  }
`;

const Crown = styled.svg`
  position: absolute;
  left: 60px;
  top: -13px;
`;
